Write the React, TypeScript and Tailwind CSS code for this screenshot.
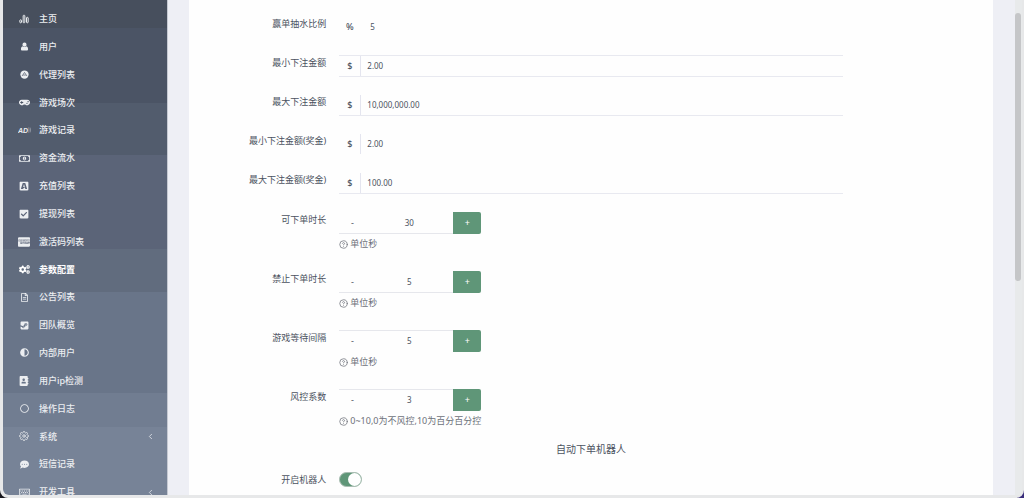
import React, { FC, useState } from "react";
import type { IconType } from "react-icons";
import {
  FaAddressBook,
  FaAdjust,
  FaBuysellads,
  FaCcAmex,
  FaCheckSquare,
  FaCogs,
  FaCommentDots,
  FaGamepad,
  FaRegCircle,
  FaRegFileAlt,
  FaRegKeyboard,
  FaRegMoneyBillAlt,
  FaSteamSquare,
} from "react-icons/fa";
import { FiChevronLeft, FiHelpCircle, FiSettings } from "react-icons/fi";

type Icon = IconType | FC<{ size?: number }>;

const BarsIcon: FC<{ size?: number }> = ({ size }) => (
  <svg
    width={size}
    height={size}
    viewBox="0 0 24 24"
    fill="none"
    stroke="currentColor"
    strokeWidth="2.4"
  >
    <rect x="2" y="14" width="4" height="7" rx="1.5" />
    <rect x="10" y="3" width="4" height="18" rx="1.5" />
    <rect x="18" y="8" width="4" height="13" rx="1.5" />
  </svg>
);

const UserIcon: FC<{ size?: number }> = ({ size }) => (
  <svg width={size} height={size} viewBox="0 0 24 24" fill="currentColor">
    <circle cx="12" cy="7" r="5.5" />
    <path d="M7 11c-3 1-4.500 4-4.500 8 0 2 1.500 3.500 3.500 3.500h12c2 0 3.500-1.500 3.500-3.500 0-4-1.500-7-4.500-8-1.200 1.500-3 2.500-5 2.500S8.200 12.500 7 11z" />
  </svg>
);

const AdnIcon: FC<{ size?: number }> = ({ size }) => (
  <svg width={size} height={size} viewBox="0 0 24 24">
    <circle cx="12" cy="12" r="11" fill="currentColor" />
    <path
      d="M5.500 16 12 6.500 18.500 16M8.500 13.500h7"
      fill="none"
      stroke="#4b5465"
      strokeWidth="1.800"
    />
  </svg>
);

const AudioIcon: FC = () => (
  <svg width="13" height="8" viewBox="0 0 26 16" fill="none">
    <text
      x="0"
      y="13"
      fill="currentColor"
      className="font-['Liberation_Sans'] text-[14px] font-bold italic"
    >
      AD
    </text>
    <path
      d="M21 3c1.500 3 1.500 7 0 10M24 3c1.500 3 1.500 7 0 10"
      stroke="currentColor"
      strokeWidth="1.200"
      opacity="0.600"
    />
  </svg>
);

interface MenuItem {
  icon: Icon;
  title: string;
  size?: number;
  active?: boolean;
  children?: boolean;
}

const menu: MenuItem[] = [
  { icon: BarsIcon, title: "主页", size: 10 },
  { icon: UserIcon, title: "用户" },
  { icon: AdnIcon, title: "代理列表" },
  { icon: FaGamepad, title: "游戏场次", size: 11 },
  { icon: AudioIcon, title: "游戏记录" },
  { icon: FaRegMoneyBillAlt, title: "资金流水", size: 11 },
  { icon: FaBuysellads, title: "充值列表", size: 10 },
  { icon: FaCheckSquare, title: "提现列表", size: 10 },
  { icon: FaCcAmex, title: "激活码列表", size: 12 },
  { icon: FaCogs, title: "参数配置", size: 11, active: true },
  { icon: FaRegFileAlt, title: "公告列表" },
  { icon: FaSteamSquare, title: "团队概览" },
  { icon: FaAdjust, title: "内部用户" },
  { icon: FaAddressBook, title: "用户ip检测", size: 10 },
  { icon: FaRegCircle, title: "操作日志" },
  { icon: FiSettings, title: "系统", size: 10, children: true },
  { icon: FaCommentDots, title: "短信记录" },
  { icon: FaRegKeyboard, title: "开发工具", size: 11, children: true },
];

const Sidebar: FC = () => (
  <nav className="w-[165px] shrink-0 overflow-hidden rounded-bl-md border-r border-[#c5c9d2] bg-[linear-gradient(#474f5d_0_28px,#4b5465_28px_103px,#525c6d_103px_155px,#5b6478_155px_249px,#616c7e_249px_292px,#697589_292px_393px,#717d91_393px_427px,#778397_427px)] text-[#eceef1]">
    <ul className="mt-[5px] grid h-[501px] auto-rows-fr">
      {menu.map((item) => (
        <li key={item.title} className="flex">
          <a
            href="#"
            className={`flex w-full items-center gap-2 pr-3 pl-[14px] ${
              item.active ? "font-bold text-white" : "font-medium"
            }`}
          >
            <span className="flex w-[14px] justify-center">
              <item.icon size={item.size ?? 9} />
            </span>
            <span className="flex-1">{item.title}</span>
            {item.children && <FiChevronLeft size={9} />}
          </a>
        </li>
      ))}
    </ul>
  </nav>
);

interface FieldProps {
  id: string;
  label: string;
  children: React.ReactNode;
}

const Field: FC<FieldProps> = ({ id, label, children }) => (
  <div className="grid grid-cols-12">
    <label
      htmlFor={id}
      className="col-span-2 pr-1 text-right leading-4 whitespace-nowrap"
    >
      {label}
    </label>
    <div className="col-span-8 px-[9px]">{children}</div>
  </div>
);

interface AmountProps {
  id: string;
  label: string;
  sign: string;
  value: string;
  border: string;
  divider?: string;
}

const amounts: AmountProps[] = [
  { id: "rate", label: "赢单抽水比例", sign: "%", value: "5", border: "border-transparent", divider: "border-transparent" },
  { id: "min", label: "最小下注金额", sign: "$", value: "2.00", border: "border-[#e8e9f0]" },
  { id: "max", label: "最大下注金额", sign: "$", value: "10,000,000.00", border: "border-t-transparent border-b-[#e8e9f0]" },
  { id: "bonus-min", label: "最小下注金额(奖金)", sign: "$", value: "2.00", border: "border-transparent" },
  { id: "bonus-max", label: "最大下注金额(奖金)", sign: "$", value: "100.00", border: "border-t-transparent border-b-[#e8e9f0]" },
];

const AmountField: FC<AmountProps> = (props) => (
  <Field id={props.id} label={props.label}>
    <div className={`flex h-[22px] border-y ${props.border}`}>
      <span
        className={`flex w-[22px] items-center justify-center border-r font-medium ${
          props.divider ?? "border-[#e4e5ef]"
        }`}
      >
        {props.sign}
      </span>
      <input
        id={props.id}
        defaultValue={props.value}
        className={`min-w-0 flex-1 text-[8px] outline-none ${
          props.sign === "%" ? "px-[9px]" : "px-[6px]"
        }`}
      />
    </div>
  </Field>
);

interface StepperProps {
  id: string;
  label: string;
  value: number;
  help: string;
  border: string;
}

const steppers: StepperProps[] = [
  { id: "open", label: "可下单时长", value: 30, help: "单位秒", border: "border-t-transparent border-b-[#e6e7ec]" },
  { id: "stop", label: "禁止下单时长", value: 5, help: "单位秒", border: "border-t-transparent border-b-[#e6e7ec]" },
  { id: "wait", label: "游戏等待间隔", value: 5, help: "单位秒", border: "border-t-[#e6e7ec] border-b-transparent" },
  { id: "risk", label: "风控系数", value: 3, help: "0~10,0为不风控,10为百分百分控", border: "border-t-[#e6e7ec] border-b-transparent" },
];

const StepperField: FC<StepperProps> = (props) => {
  const [value, setValue] = useState(props.value);
  return (
    <Field id={props.id} label={props.label}>
      <div className="flex h-[22px] w-[142px]">
        <div className={`flex flex-1 border-y ${props.border}`}>
          <button
            type="button"
            className="w-[26px]"
            onClick={() => setValue(value - 1)}
          >
            -
          </button>
          <input
            id={props.id}
            value={value}
            onChange={(e) => setValue(Number(e.target.value))}
            className="w-0 flex-1 text-center text-[8px] outline-none"
          />
        </div>
        <button
          type="button"
          className="w-7 rounded-r-xs bg-[#5f9678] text-white"
          onClick={() => setValue(value + 1)}
        >
          +
        </button>
      </div>
      <p className="flex h-5 items-center gap-[2px] whitespace-nowrap text-[#6d717a]">
        <FiHelpCircle size={9} />
        {props.help}
      </p>
    </Field>
  );
};

export default function App() {
  return (
    <div className="h-screen overflow-hidden bg-linear-to-r from-[#16161c] to-[#3a2d7c] font-['Noto_Sans','Noto_Sans_CJK_SC',sans-serif] text-[9px] text-[#4b5260]">
      <div className="flex h-full overflow-hidden rounded-b-lg bg-[#e7e8e9] pr-[2px] pb-[3px] pl-[3px]">
        <Sidebar />
        <main className="min-w-0 flex-1 overflow-hidden bg-[#eeeff5] pr-[22px] pl-[21px]">
          <form className="min-h-full bg-[#fefefe] px-[11px] pt-4">
            <div className="flex flex-col gap-[17px]">
              {amounts.map((item) => (
                <AmountField key={item.id} {...item} />
              ))}
            </div>
            <div className="mt-[18px] flex flex-col gap-[17px]">
              {steppers.map((item) => (
                <StepperField key={item.id} {...item} />
              ))}
            </div>
            <h4 className="mt-[10px] mb-[15px] text-center text-[10px] leading-4">
              自动下单机器人
            </h4>
            <Field id="robot" label="开启机器人">
              <input
                id="robot"
                type="checkbox"
                defaultChecked
                className="flex h-[15px] w-[23px] appearance-none items-center rounded-full border border-[#a9bdb2] bg-[#dfe1e6] before:size-[13px] before:rounded-full before:bg-white checked:justify-end checked:bg-[#5f9678]"
              />
            </Field>
          </form>
        </main>
        <div className="w-[7px] bg-[#e8eaeb] pt-[13px] pr-px">
          <div className="h-[268px] rounded-full bg-[#c5c6c8]" />
        </div>
      </div>
    </div>
  );
}
